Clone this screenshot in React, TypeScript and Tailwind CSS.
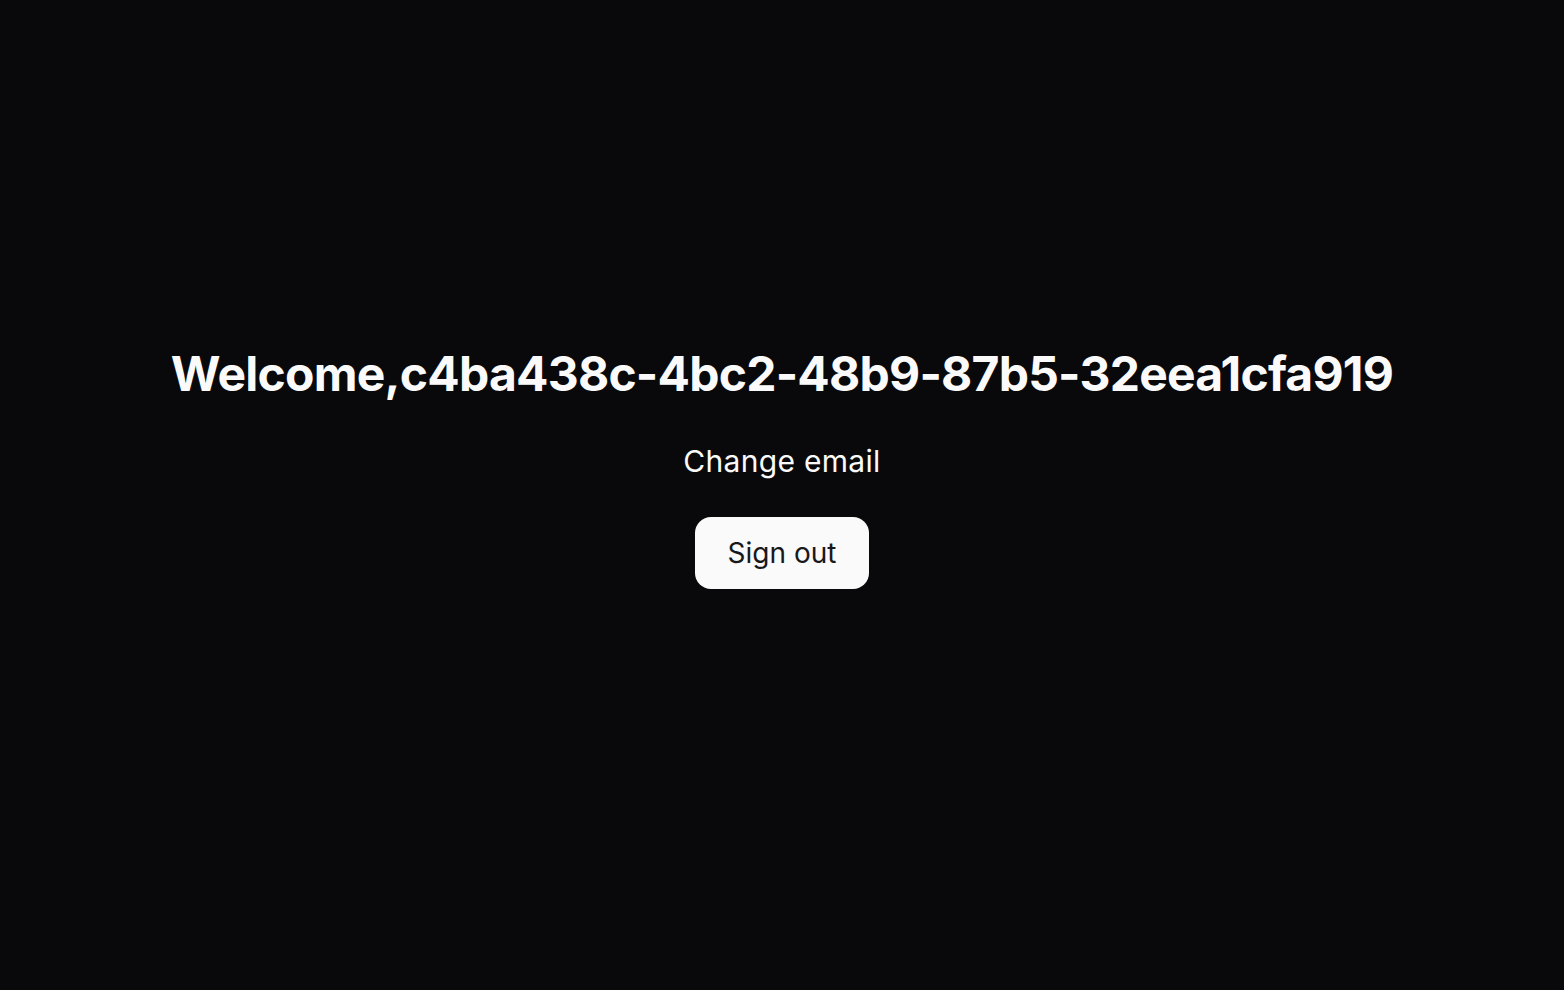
export default function App() {
  return (
    <main className="flex min-h-screen flex-col items-center justify-center bg-[#09090b] pb-[52px] font-['Inter',sans-serif] text-[#fafafa]">
      <h1 className="text-5xl leading-none font-bold tracking-[-0.016em]">
        Welcome,c4ba438c-4bc2-48b9-87b5-32eea1cfa919
      </h1>
      <a className="mt-[45px] cursor-pointer text-3xl tracking-[0.01em]">Change email</a>
      <button className="mt-[38px] h-[72px] rounded-2xl bg-[#fafafa] px-[33px] text-[28px] font-normal text-[#18181b]">
        Sign out
      </button>
    </main>
  );
}
